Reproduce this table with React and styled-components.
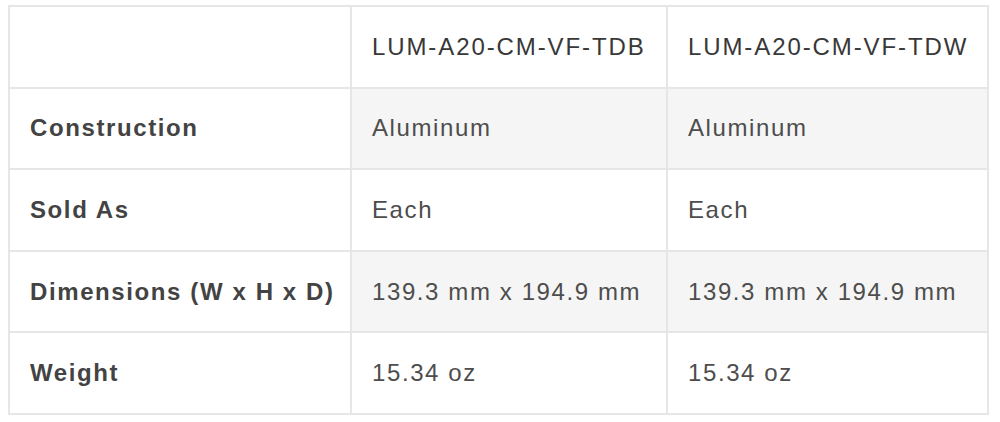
import React from "react";
import styled, { createGlobalStyle } from "styled-components";

const Global = createGlobalStyle`
  html, body { margin: 0; padding: 0; background: #ffffff; }
  body { font-family: "Liberation Sans", Arial, sans-serif; }
`;

const Page = styled.div`
  padding: 5px 13px 0 8px;
`;

const Table = styled.table`
  width: 979px;
  border-collapse: collapse;
  table-layout: fixed;
  font-family: "Liberation Sans", Arial, sans-serif;
  font-size: 24px;
  letter-spacing: 1.6px;
`;

const Row = styled.tr`
  height: 81.6px;
`;

const Cell = styled.td`
  border: 2px solid #e6e6e6;
  padding: 0 0 0 20px;
  vertical-align: middle;
  color: #4d4d4d;
  white-space: nowrap;
  background: ${(p) => (p.$striped ? "#f5f5f5" : "#ffffff")};
`;

const HeadCell = styled(Cell).attrs({ as: "th" })`
  text-align: left;
  font-weight: normal;
  color: #383838;
  letter-spacing: 1.9px;
`;

const Label = styled(Cell).attrs({ as: "th", scope: "row" })`
  text-align: left;
  font-weight: bold;
  color: #434343;
  background: #ffffff;
`;

const products = ["LUM-A20-CM-VF-TDB", "LUM-A20-CM-VF-TDW"];

const rows = [
  ["Construction", "Aluminum", "Aluminum"],
  ["Sold As", "Each", "Each"],
  ["Dimensions (W x H x D)", "139.3 mm x 194.9 mm", "139.3 mm x 194.9 mm"],
  ["Weight", "15.34 oz", "15.34 oz"],
];

export default function App() {
  return (
    <Page>
      <Global />
      <Table>
        <colgroup>
          <col style={{ width: 342 }} />
          <col style={{ width: 316 }} />
          <col style={{ width: 321 }} />
        </colgroup>
        <thead>
          <Row>
            <HeadCell />
            {products.map((p) => (
              <HeadCell key={p}>{p}</HeadCell>
            ))}
          </Row>
        </thead>
        <tbody>
          {rows.map((r, i) => (
            <Row key={r[0]}>
              <Label>{r[0]}</Label>
              <Cell $striped={i % 2 === 0}>{r[1]}</Cell>
              <Cell $striped={i % 2 === 0}>{r[2]}</Cell>
            </Row>
          ))}
        </tbody>
      </Table>
    </Page>
  );
}
